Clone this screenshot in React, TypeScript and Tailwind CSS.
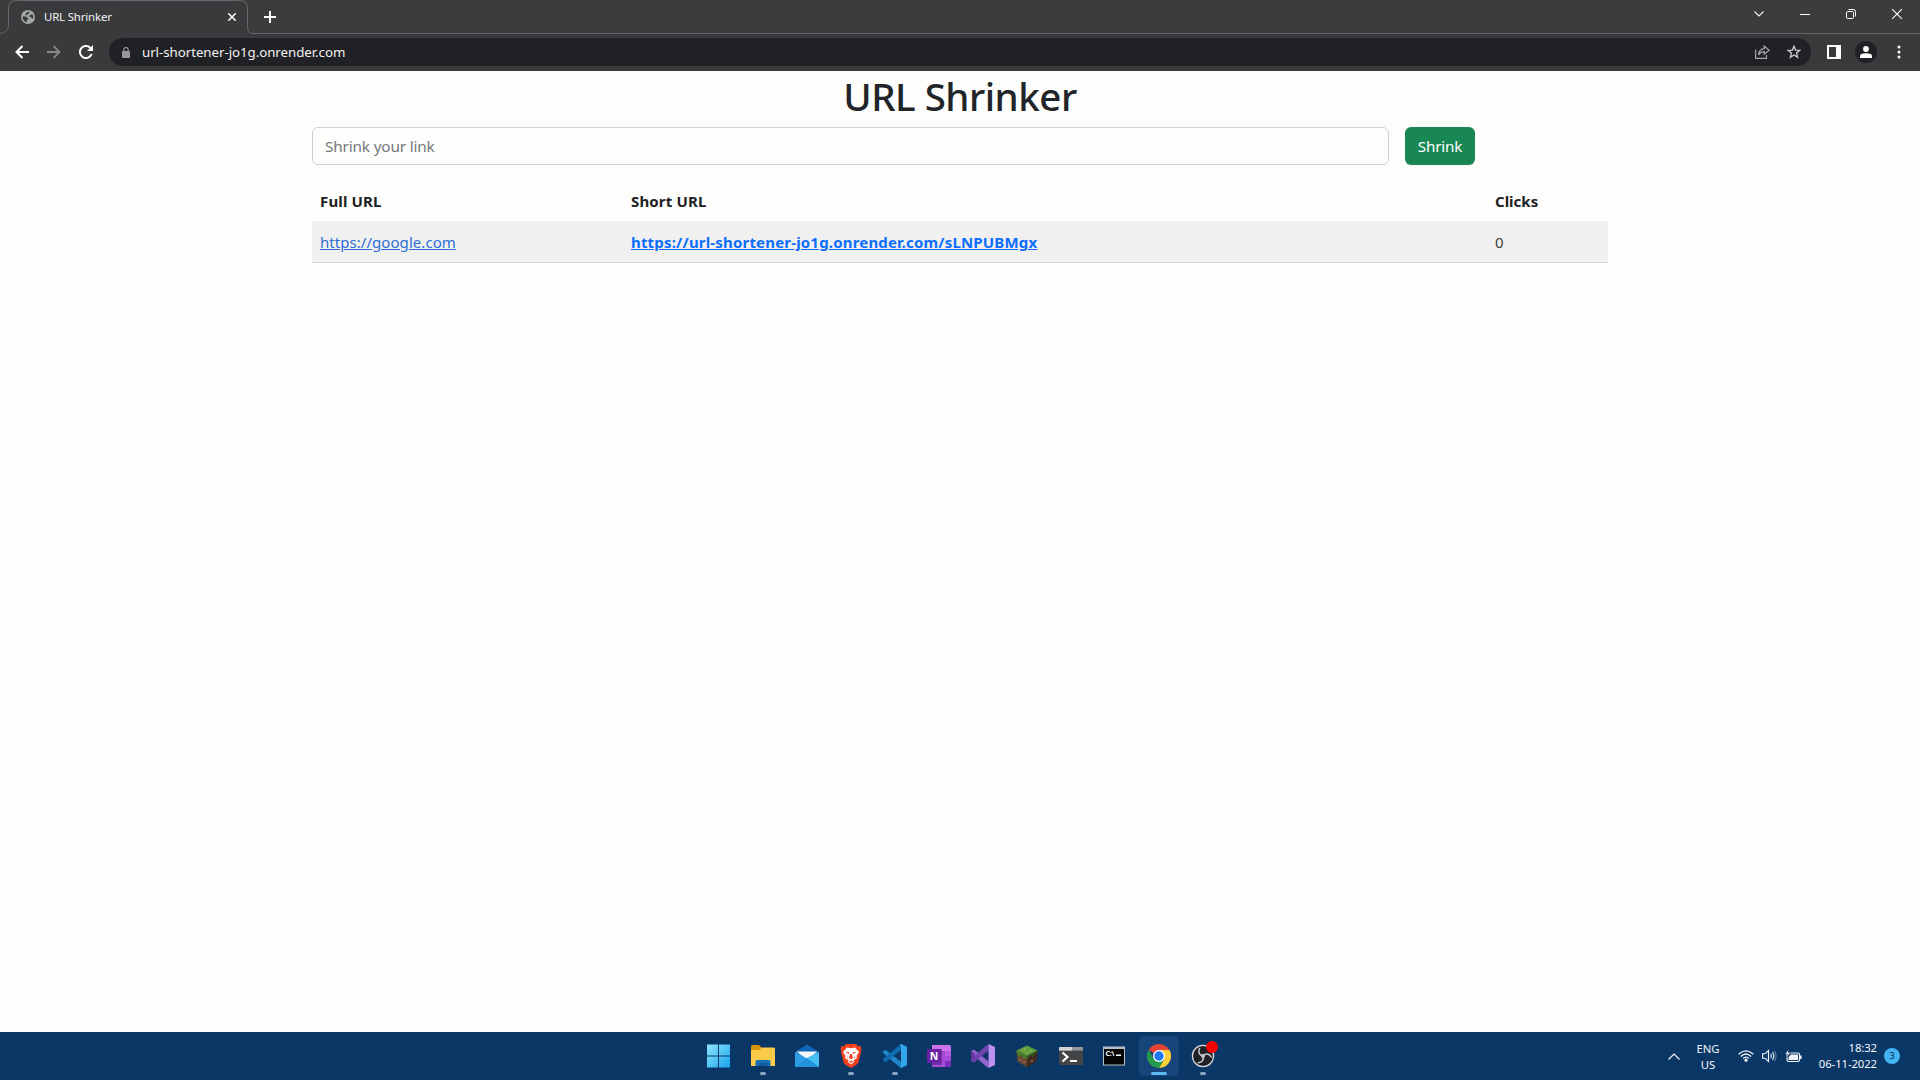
import React from "react";

const SANS = "font-['Noto_Sans','Open_Sans',sans-serif]";

function Globe() {
  return (
    <svg width="14" height="14" viewBox="0 0 14 14">
      <circle cx="7" cy="7" r="7" fill="#a3a7a8" />
      <path d="M1.600 6.200 4.600 6.400 6.300 7.800 7.400 8 7.200 9.600 5.800 10 6 12.200C3.200 11.800 1.400 9 1.600 6.200ZM6.300 1.700 8.200 1.700 8 3.400 6.700 4 6.500 5 5 5.200 4.200 4.400ZM8.600 5.200 11.400 4.200 12.400 6.500 12.200 8.600 10.800 8.500 10 7 8.300 6.800Z" fill="#3c3d3e" />
    </svg>
  );
}

function Tab() {
  return (
    <div className="relative h-[34px] w-[252px] shrink-0">
      <svg className="absolute inset-0" width="252" height="34" viewBox="0 0 252 34" fill="none">
        <path d="M0 33.500C5 33.500 8.500 30 8.500 25V8.500Q8.500.5 16.500.5H239.500Q247.500.5 247.500 8.500V26Q247.500 33.500 252 33.500V34H0Z" fill="#393a3c" />
        <path d="M0 33.500C5 33.500 8.500 30 8.500 25V8.500Q8.500.5 16.500.5H239.500Q247.500.5 247.500 8.500V26Q247.500 33.500 252 33.500" stroke="#67676d" />
      </svg>
      <div className="relative flex h-[34px] items-center pl-[21px] pr-[16px]">
        <Globe />
        <span className="ml-[9px] flex-1 text-[11.4px] tracking-[-0.15px] text-[#f4f4f4]">URL Shrinker</span>
        <svg width="8" height="8" viewBox="0 0 8 8" stroke="#fff" strokeWidth="1.500"><path d="M.3.3 7.700 7.700M7.700.3.3 7.700" /></svg>
      </div>
    </div>
  );
}

function TabStrip() {
  return (
    <div className="flex h-[34px] bg-[#3c3c3a]">
      <Tab />
      <div className="flex h-[34px] flex-1 items-center border-b border-[#62646a] pl-[12px]">
        <svg width="12" height="12" viewBox="0 0 12 12" stroke="#fff" strokeWidth="2"><path d="M6 0V12M0 6H12" /></svg>
        <svg className="-mt-[5px] ml-auto mr-[36px]" width="10" height="6" viewBox="0 0 10 6" fill="none" stroke="#ececec" strokeWidth="1.200"><path d="M.5.5 5 5 9.500.5" /></svg>
        <svg className="-mt-[5px] mr-[36px]" width="10" height="10" viewBox="0 0 10 10" stroke="#fff"><path d="M0 5.500H10" /></svg>
        <svg className="-mt-[5px] mr-[36px]" width="10" height="10" viewBox="0 0 10 10" fill="none" stroke="#fff"><rect x=".5" y="2.500" width="7" height="7" rx="1.200" /><path d="M2.500.5H7.500Q9.500.5 9.500 2.500V7.500" /></svg>
        <svg className="-mt-[5px] mr-[18px]" width="10" height="10" viewBox="0 0 10 10" stroke="#fff" strokeWidth="1.100"><path d="M0 0 10 10M10 0 0 10" /></svg>
      </div>
    </div>
  );
}

function Toolbar() {
  return (
    <div className="flex h-[37px] items-center bg-[#393a3c] pb-[1px] pl-[15px] pr-[19px]">
      <svg width="14" height="14" viewBox="0 0 14 14" fill="none" stroke="#fff" strokeWidth="2"><path d="M14 7H1.500M7.500 1 1.500 7 7.500 13" /></svg>
      <svg className="ml-[18px]" width="14" height="14" viewBox="0 0 14 14" fill="none" stroke="#88898b" strokeWidth="1.800"><path d="M0 7H12.500M6.500 1 12.500 7 6.500 13" /></svg>
      <svg className="ml-[18px]" width="14" height="14" viewBox="0 0 14 14" fill="none"><path d="M12.600 9A6 6 0 1 1 11.200 2.800L12.500 4" stroke="#fff" strokeWidth="2" /><path d="M14 0V6H8Z" fill="#fff" /></svg>
      <div className="ml-[16px] flex h-[28px] flex-1 items-center rounded-full bg-[#202124] pl-[13px] pr-[10px]">
        <svg width="8" height="11" viewBox="0 0 8 11"><path d="M1.800 4.500V2.700a2.200 2.200 0 0 1 4.400 0V4.500" fill="none" stroke="#96989b" strokeWidth="1.200" /><rect y="4" width="8" height="7" rx="1" fill="#96989b" /></svg>
        <span className="ml-[12px] flex-1 pt-[2px] text-[13.300px] tracking-[-0.05px] text-[#f2f2f2]">url-shortener-jo1g.onrender.com</span>
        <svg width="15" height="14" viewBox="0 0 15 14" fill="none" stroke="#a5a6a8" strokeWidth="1.200"><path d="M.6 4.500V13.400H11.500V10M3.500 9.800C3.900 6 6 4 9.300 3.700V1.100L14.100 5.200 9.300 9.200V6.700C7 6.700 5 7.500 3.500 9.800Z" /></svg>
        <svg className="ml-[17px]" width="14" height="14" viewBox="0 0 14 14" fill="none" stroke="#d0d0d2" strokeWidth="1.300"><path d="M7 1.200 8.600 5.100 12.800 5.400 9.600 8.100 10.600 12.300 7 10 3.400 12.300 4.400 8.100 1.200 5.400 5.400 5.100Z" /></svg>
      </div>
      <svg className="ml-[16px]" width="14" height="14" viewBox="0 0 14 14"><path fillRule="evenodd" d="M0 0H14V14H0ZM2 2V12H9V2Z" fill="#fff" /></svg>
      <div className="ml-[14px] flex size-[22px] items-center justify-center rounded-full bg-[#202124]">
        <svg width="12" height="12" viewBox="0 0 12 12" fill="#fff"><circle cx="6" cy="3" r="2.900" /><path d="M0 12V10Q0 7.200 6 7.200T12 10V12Z" /></svg>
      </div>
      <svg className="ml-[20px]" width="4" height="14" viewBox="0 0 4 14" fill="#fff"><circle cx="2" cy="2" r="1.500" /><circle cx="2" cy="7" r="1.500" /><circle cx="2" cy="12" r="1.500" /></svg>
    </div>
  );
}

function Page() {
  return (
    <main className="flex-1 bg-[#fdfdfb] text-[#212529]">
      <div className="mx-auto w-[1296px]">
        <h1 className="mb-2 h-12 text-center text-[38.500px] font-medium leading-[50px] tracking-[-0.5px]">URL Shrinker</h1>
        <form className="mb-4 flex" onSubmit={(e) => e.preventDefault()}>
          <input className="h-[38px] w-[1077px] rounded-md border border-[#ced0d6] bg-transparent px-3 text-[15.300px] tracking-[-0.15px] placeholder:text-[#75797c]" placeholder="Shrink your link" />
          <button className="ml-4 h-[38px] w-[70px] rounded-md bg-[#198754] text-[15.300px] tracking-[-0.2px] text-white">Shrink</button>
        </form>
        <table className="w-full table-fixed text-left">
          <colgroup><col className="w-[311px]" /><col className="w-[864px]" /><col /></colgroup>
          <thead>
            <tr className="h-[40px] text-[15px] font-bold tracking-[0.15px] text-[#1e2124]">
              <th className="px-2">Full URL</th><th className="px-2">Short URL</th><th className="px-2 tracking-normal">Clicks</th>
            </tr>
          </thead>
          <tbody>
            <tr className="h-[41px] border-b border-[#d5d6d9] bg-[#f0f0f0] text-[15px]">
              <td className="px-2 pt-[2px]"><a href="#" className="tracking-[0.05px] text-[#2d6fd6] underline">https://google.com</a></td>
              <td className="px-2 pt-[2px]"><a href="#" className="font-bold tracking-[0.180px] text-[#0d6efd] underline">https://url-shortener-jo1g.onrender.com/sLNPUBMgx</a></td>
              <td className="px-2 pt-[2px] text-[#3c3f42]">0</td>
            </tr>
          </tbody>
        </table>
      </div>
    </main>
  );
}

const svg = { width: 24, height: 24, viewBox: "0 0 24 24" };

const apps: { name: string; icon: React.ReactNode; state?: "open" | "active" }[] = [
  { name: "Start", icon: (
    <svg {...svg}>
      <defs><linearGradient id="win" x1="0" y1="0" x2="1" y2="1"><stop stopColor="#8ce6fb" /><stop offset="1" stopColor="#18a3ed" /></linearGradient></defs>
      <path d="M0 .5H11V11.500H0ZM12 .5H23V11.500H12ZM0 12.500H11V23.500H0ZM12 12.500H23V23.500H12Z" fill="url(#win)" />
    </svg>) },
  { name: "File Explorer", state: "open", icon: (
    <svg {...svg}>
      <path d="M0 2.500Q0 1 1.500 1H8L11 4V8H0Z" fill="#d9930c" />
      <path d="M0 6H8L11 3.500H22.500Q24 3.500 24 5V22H0Z" fill="#fccb4a" />
      <path d="M4.500 22V17.500Q4.500 16 6 16H18Q19.500 16 19.500 17.500V22Z" fill="#1470b5" /><path d="M8 19H16V22H8Z" fill="#0e5b98" />
    </svg>) },
  { name: "Mail", icon: (
    <svg {...svg}>
      <path d="M0 8 12 .5 24 8V14H0Z" fill="#1066b5" /><path d="M1.500 7.500H22.500L12 16Z" fill="#f4f7fa" />
      <path d="M0 8 13 15 24 23H0Z" fill="#2c9de4" /><path d="M24 8V23H20L10 15Z" fill="#45bff0" /><path d="M0 23 12 14 24 23Z" fill="#2491db" />
    </svg>) },
  { name: "Brave", state: "open", icon: (
    <svg {...svg}>
      <path d="M7 0H17L19 2.300 21.500 2 22.500 5 21.700 7 22 8 19.300 18.500Q18.500 20.500 12 24 5.500 20.500 4.700 18.500L2 8 2.300 7 1.500 5 2.500 2 5 2.300Z" fill="#f4401b" />
      <path d="M8 3.500 12 4.200 16 3.500 20 8 17.500 12 18 14 14.500 16.500 15 18 12 20.500 9 18 9.500 16.500 6 14 6.500 12 4 8Z" fill="#fff" />
      <path d="M6.500 7.800 10.500 8.500 9.500 10ZM17.500 7.800 13.500 8.500 14.500 10ZM11.200 10H12.800L14 14 12 15.300 10 14ZM8 12 9.300 14 8.500 14.500ZM16 12 14.700 14 15.500 14.500ZM10 17.500 12 16.600 14 17.500 12 19Z" fill="#f4401b" />
    </svg>) },
  { name: "Visual Studio Code", state: "open", icon: (
    <svg {...svg}>
      <path d="M0 7.500 2.500 5.700 18 17.800V23L16 22.500 0 9Z" fill="#1f86cc" /><path d="M0 16.500 2.500 18.300 18 6.200V1L16 1.500 0 15Z" fill="#0e6bad" />
      <path d="M16.500 .5 18 0 24 2.800V21.200L18 24 16.500 23.500 18 22V2Z" fill="#35a5ea" />
    </svg>) },
  { name: "OneNote", icon: (
    <svg {...svg}>
      <path d="M5 1H22Q24 1 24 3V21Q24 23 22 23H5Z" fill="#a54bd6" /><path d="M5 1H22Q24 1 24 3V7H5Z" fill="#cc73ea" /><path d="M18 7H24V12H18Z" fill="#b95ae0" /><path d="M18 17H24V21Q24 23 22 23H18Z" fill="#7a2cba" />
      <path d="M5 5H15V21H5Z" fill="#50177c" opacity=".5" /><rect x="0" y="5" width="14" height="14" rx="1" fill="#6a22a5" />
      <text x="7" y="16" textAnchor="middle" fontSize="10.500" fontWeight="700" fill="#fff">N</text>
    </svg>) },
  { name: "Visual Studio", icon: (
    <svg {...svg}>
      <path d="M0 7 3 5.500 17.500 17.500V24L14 21.500 0 9Z" fill="#9463ce" /><path d="M0 17 3 18.500 17.500 6.500V0L14 2.500 0 15Z" fill="#7042ad" /><path d="M0 7 3.500 9.500V14.500L0 17Z" fill="#62369c" />
      <path d="M17.500 0 24 3V21L17.500 24Z" fill="#bd91f2" />
    </svg>) },
  { name: "Minecraft", icon: (
    <svg {...svg}>
      <path d="M1.500 6.500 12 12V23L2.500 17.500Z" fill="#694730" /><path d="M22.500 6.500 12 12V23L21.500 17.500Z" fill="#422b1e" />
      <path d="M12 1.500 22.500 6.500 12 12 1.500 6.500Z" fill="#629b3d" /><path d="M1.500 6.500 12 12V14.500L10 13.500V15L7.500 13.500V12L5 11V13L3 12V10.500L1.600 9.500Z" fill="#477b2c" /><path d="M22.500 6.500 12 12V15L14 14V12.500L17 11V13L19 12V10L22.400 8.500Z" fill="#31541f" />
      <path d="M7 5.500 10 4 12 5 9 6.500ZM13 7 16 5.500 18 6.500 15 8ZM10 9 12 8 13.500 9 12 10Z" fill="#7db653" /><path d="M4 15h2v2H4ZM8 17h2v2H8ZM16 16h2v2h-2Z" fill="#8a654b" />
    </svg>) },
  { name: "Terminal", icon: (
    <svg {...svg}>
      <rect y="3" width="24" height="18" rx="1" fill="#444547" /><path d="M0 6.500V4Q0 3 1 3H23Q24 3 24 4V6.500Z" fill="#96999c" /><path d="M1 3H13V6.500H0V4Z" fill="#d2d4d6" />
      <path d="M3.500 8.500 8.500 13 3.500 17.500" fill="none" stroke="#fff" strokeWidth="2.200" /><path d="M11 16H18V18H11Z" fill="#fff" />
    </svg>) },
  { name: "Command Prompt", icon: (
    <svg {...svg}>
      <path d="M0 2.500H22V21.500H0Z" fill="#b6c0c8" /><path d="M1 5H21V20.500H1Z" fill="#050505" />
      <text x="2.500" y="12" fontSize="7" fontWeight="700" fill="#fff" textLength="9">C:\</text><path d="M13 10.500H18V12H13Z" fill="#fff" />
    </svg>) },
  { name: "Chrome", state: "active", icon: (
    <svg {...svg}>
      <path d="M12 12 1.600 6A12 12 0 0 1 22.400 6H12Z" fill="#e44436" /><path d="M12 6H22.400A12 12 0 0 1 12 24L17.200 15Z" fill="#fdcf38" /><path d="M1.600 6A12 12 0 0 0 12 24L17.200 15 6.800 15Z" fill="#259b4b" />
      <circle cx="12" cy="12" r="6" fill="#fff" /><circle cx="12" cy="12" r="4.700" fill="#1f78ee" />
    </svg>) },
  { name: "OBS Studio", state: "open", icon: (
    <svg {...svg} overflow="visible">
      <circle cx="12" cy="12" r="10.600" fill="#c9ccd0" stroke="#d9dbde" strokeWidth="1.200" />
      <circle cx="12" cy="12" r="9.900" fill="#202125" />
      <g fill="none" stroke="#c9ccd0" strokeWidth="1.500" strokeLinecap="round">
        <path d="M8.600 4.500C6.600 8.200 8.500 11.300 12 12" />
        <path d="M8.600 4.500C6.600 8.200 8.500 11.300 12 12" transform="rotate(120 12 12)" />
        <path d="M8.600 4.500C6.600 8.200 8.500 11.300 12 12" transform="rotate(240 12 12)" />
      </g>
      <circle cx="12" cy="12" r="2" fill="#c9ccd0" />
      <circle cx="21" cy="3" r="6" fill="#fa0000" />
    </svg>) },
];

function Taskbar() {
  return (
    <footer className="flex h-[48px] bg-[#0b3766] pl-[697px] text-[#f3f6fa]">
      {apps.map((a) => (
        <div key={a.name} className="flex w-[44px] justify-center py-[4px]">
          <div className={a.state === "active" ? "flex h-[40px] w-[40px] flex-col items-center rounded bg-[#17457a] pt-[8px]" : "flex h-[40px] w-[40px] flex-col items-center pt-[8px]"}>
            {a.icon}
            {a.state === "active" && <i className="mt-[4px] h-[3px] w-[16px] shrink-0 rounded-full bg-[#5ab9f2]" />}
            {a.state === "open" && <i className="mt-[4px] h-[3px] w-[6px] shrink-0 rounded-full bg-[#8ba5c1]" />}
          </div>
        </div>
      ))}
      <div className="ml-auto flex items-center pr-[20px] text-[11.300px] leading-[16px]">
        <svg width="12" height="7" viewBox="0 0 12 7" fill="none" stroke="#f3f6fa" strokeWidth="1.200"><path d="M.5 6.500 6 1 11.500 6.500" /></svg>
        <div className="ml-[12px] w-[32px] pt-[2px] text-center">ENG<br />US</div>
        <svg className="ml-[14px]" width="16" height="12" viewBox="0 0 16 12" fill="none" stroke="#f3f6fa" strokeWidth="1.300"><path d="M.6 4.200Q8-2.500 15.400 4.200M2.800 6.400Q8 1.700 13.200 6.400M5 8.500Q8 5.800 11 8.500" /><circle cx="8" cy="10.200" r="1.600" fill="#f3f6fa" stroke="none" /></svg>
        <svg className="ml-[8px]" width="15" height="14" viewBox="0 0 15 14" fill="none" stroke="#f3f6fa" strokeWidth="1.100"><path d="M.6 4.800H3L6.500 1.500V12.500L3 9.200H.6ZM8.700 4.800Q10.200 7 8.700 9.200M10.500 3Q13.200 7 10.500 11" /><path d="M12.300 1.500Q16 7 12.300 12.500" opacity=".35" /></svg>
        <svg className="ml-[8px]" width="17" height="14" viewBox="0 0 17 14"><rect x="2" y="4" width="12.500" height="8.500" rx="1.800" fill="none" stroke="#f3f6fa" strokeWidth="1.200" /><path d="M3.500 11V8L6 5.500H13V11ZM15 6.500H16.500V10H15Z" fill="#f3f6fa" /><path d="M3.500 0 0 5.200H2.300L1.500 9 5.500 3.600H3.200Z" fill="#f3f6fa" stroke="#0b3766" strokeWidth=".6" /></svg>
        <div className="ml-[13px] w-[62px] whitespace-nowrap text-right tracking-[-0.08px]">18:32<br />06-11-2022</div>
        <div className="ml-[7px] flex size-[16px] items-center justify-center rounded-full bg-[#43b4f3] text-[9.500px] text-[#0b2c4b]">3</div>
      </div>
    </footer>
  );
}

export default function App() {
  return (
    <div className={`flex h-[1080px] w-[1920px] flex-col overflow-hidden ${SANS}`}>
      <TabStrip />
      <Toolbar />
      <Page />
      <Taskbar />
    </div>
  );
}
